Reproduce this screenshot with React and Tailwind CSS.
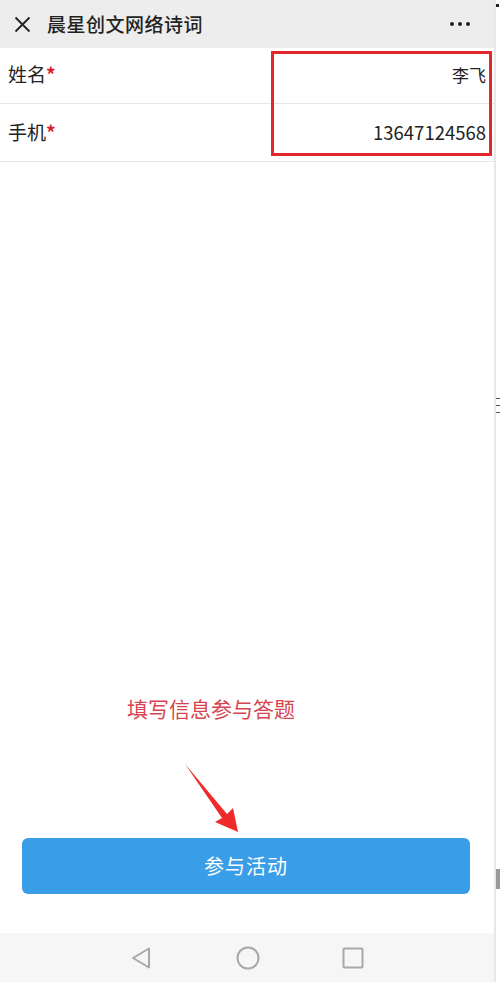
import React from 'react';

const font = { fontFamily: '"Noto Sans CJK SC", "Noto Sans", Roboto, sans-serif' };

const Row = ({ label, value, size }) => (
  <div className="h-[58px] flex items-center justify-between border-b border-[#e6e6e6] pl-2 pr-[8px]">
    <span className="text-[19px] text-[#222]">
      {label}
      <span className="text-[#d81e2c] font-bold">*</span>
    </span>
    <span className={size === 'lg' ? 'text-[18.5px] text-[#222]' : 'text-[17px] text-[#222]'}>{value}</span>
  </div>
);

const App = () => {
  return (
    <div className="w-[500px] h-[982px] flex bg-white overflow-hidden" style={font}>
      <div className="w-[494px] h-full flex flex-col relative">
        <header className="h-[48px] bg-[#ededed] flex items-center px-[14px] shrink-0">
          <svg width="17" height="17" viewBox="0 0 17 17" className="shrink-0">
            <path d="M1.5 1.5 L15.5 15.5 M15.5 1.5 L1.5 15.5" stroke="#222" strokeWidth="1.8" />
          </svg>
          <h1 className="ml-[16px] text-[19px] font-medium text-[#222] tracking-[0.5px]">晨星创文网络诗词</h1>
          <div className="ml-auto mr-[10px] flex gap-[4px]">
            <span className="w-[4px] h-[4px] rounded-full bg-[#222]" />
            <span className="w-[4px] h-[4px] rounded-full bg-[#222]" />
            <span className="w-[4px] h-[4px] rounded-full bg-[#222]" />
          </div>
        </header>

        <div className="-mt-[2px] flex flex-col">
          <Row label="姓名" value="李飞" />
          <Row label="手机" value="13647124568" size="lg" />
        </div>

        <div className="absolute left-[271px] top-[51px] w-[221px] h-[105px] border-[3px] border-[#e5262c]" />

        <div className="flex-1 flex flex-col items-center justify-end">
          <p className="text-[21px] text-[#d6454f] ml-[-72px] mb-[38px]">填写信息参与答题</p>
          <svg width="60" height="72" viewBox="0 0 60 72" className="ml-[-68px] mb-[4px]">
            <path d="M2 2 L44 52 L50 46 L55 70 L32 60 L39 56 Z" fill="#f02a2a" />
          </svg>
          <button className="w-[448px] h-[56px] ml-[-2px] rounded-[6px] bg-[#3a9de8] text-white text-[20px] tracking-[1px]">
            参与活动
          </button>
          <div className="h-[39px]" />
        </div>

        <nav className="h-[49px] bg-[#f6f6f6] flex items-center shrink-0">
          <div className="flex-1 flex justify-end pr-[84px]">
            <svg width="22" height="24" viewBox="0 0 22 24">
              <path d="M19 2.5 L19 21.5 L3 12 Z" fill="none" stroke="#a8a8a8" strokeWidth="2" strokeLinejoin="round" />
            </svg>
          </div>
          <svg width="24" height="24" viewBox="0 0 24 24">
            <circle cx="12" cy="12" r="10.5" fill="none" stroke="#a8a8a8" strokeWidth="2" />
          </svg>
          <div className="flex-1 flex justify-start pl-[82px]">
            <svg width="22" height="22" viewBox="0 0 22 22">
              <rect x="1.5" y="1.5" width="19" height="19" rx="1" fill="none" stroke="#a8a8a8" strokeWidth="2" />
            </svg>
          </div>
        </nav>
      </div>

      <div className="w-[6px] h-full border-l-2 border-[#e8e8e8] bg-white relative">
        <span className="absolute left-0 top-[4px] w-[3px] h-[3px] bg-[#222]" />
        <span className="absolute left-0 top-[398px] w-[4px] h-[1px] bg-[#555]" />
        <span className="absolute left-0 top-[405px] w-[4px] h-[1px] bg-[#555]" />
        <span className="absolute left-0 top-[412px] w-[4px] h-[1px] bg-[#555]" />
        <span className="absolute left-0 top-[869px] w-[4px] h-[20px] bg-[#9a9a9a]" />
      </div>
    </div>
  );
};

export default App;
